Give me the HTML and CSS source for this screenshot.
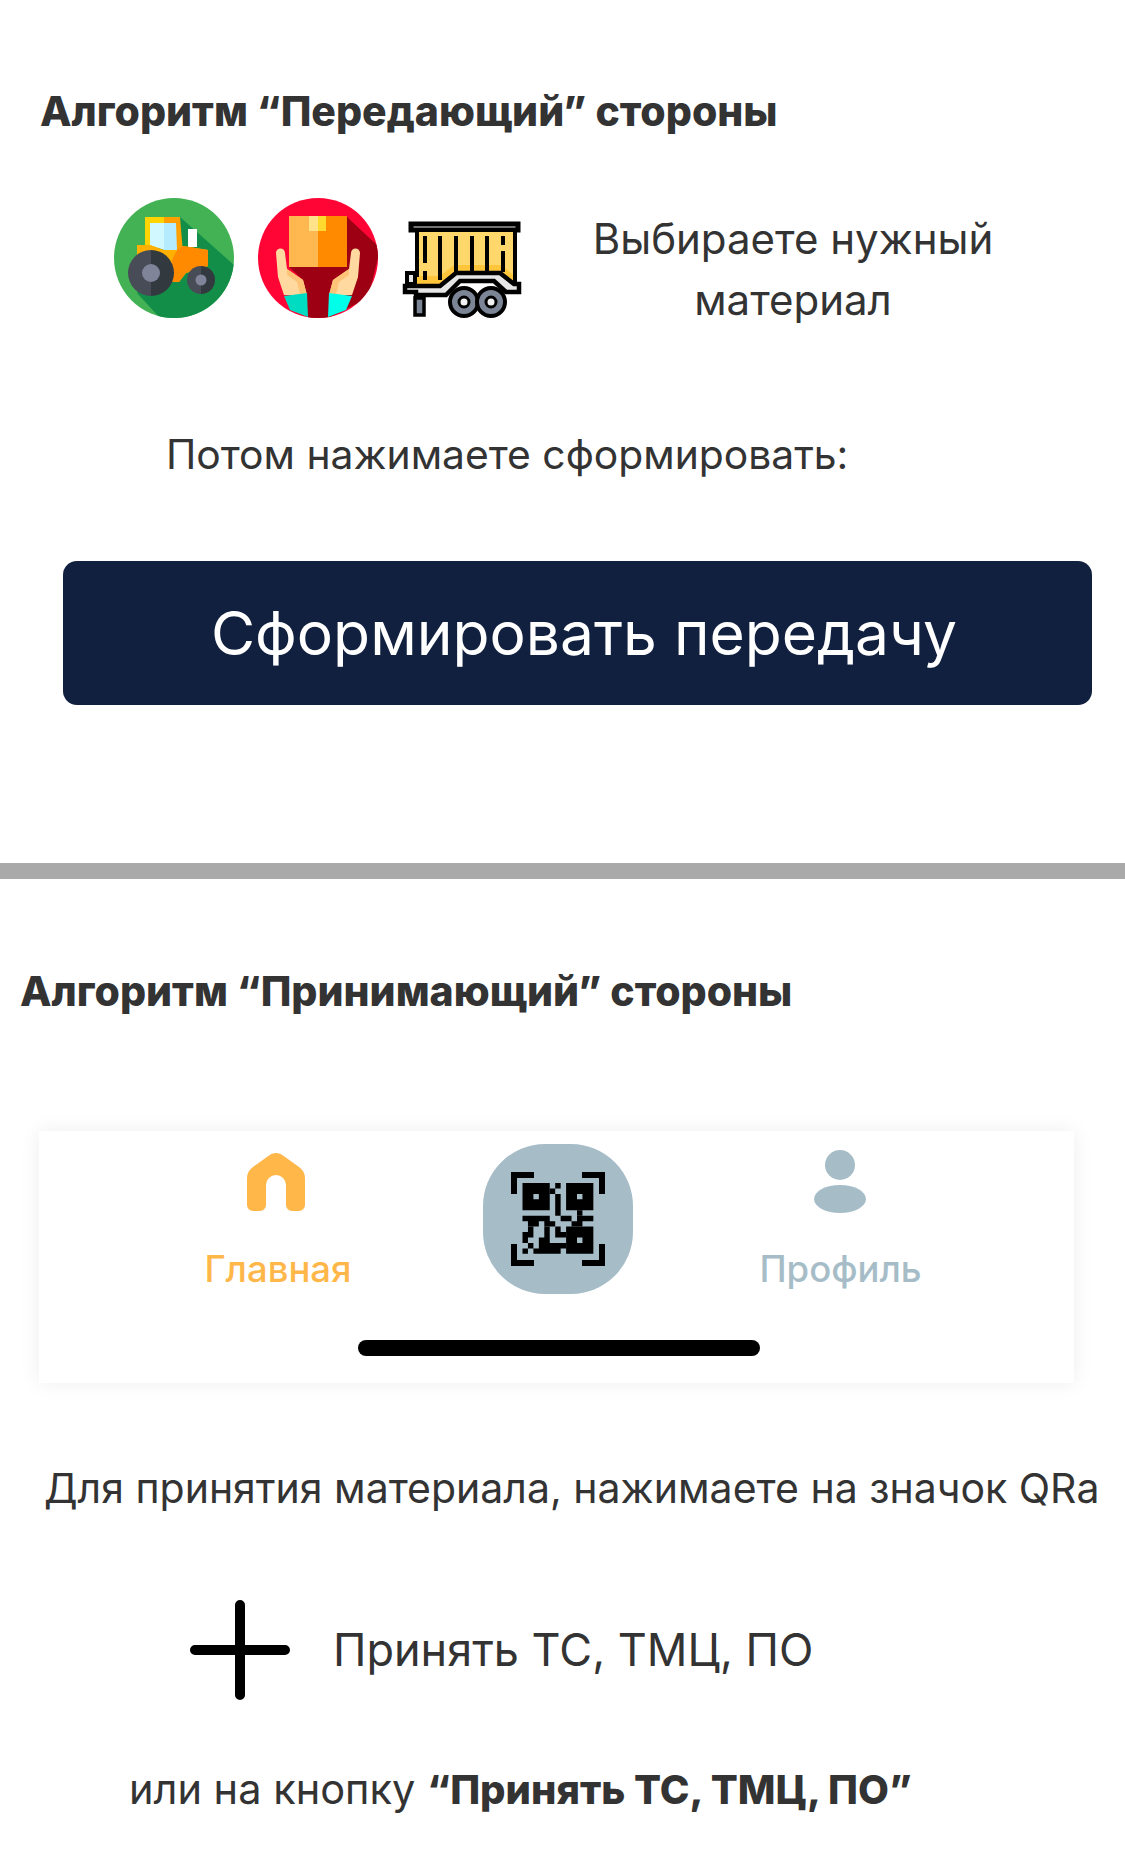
FILE: index.html
```html
<!DOCTYPE html>
<html lang="ru">
<head>
    <meta charset="UTF-8">
    <meta name="viewport" content="width=device-width, initial-scale=1.0">
    <title>Алгоритм</title>
    <link rel="stylesheet" href="styles.css">
</head>
<body>

<h2 class="algo-title sender-title">Алгоритм “Передающий” стороны</h2>

<div class="pick-row">
    <svg class="pick-icon" viewBox="0 0 120 120">
        <defs>
            <clipPath id="circle-clip"><circle cx="60" cy="60" r="60"/></clipPath>
        </defs>
        <circle cx="60" cy="60" r="60" fill="#43b254"/>
        <polygon points="66,19 120,67 120,120 46,120 23,95 40,50" fill="#138e49" clip-path="url(#circle-clip)"/>
        <rect x="74" y="31" width="9" height="18" fill="#fff"/>
        <polygon points="31,19 50,19 50,50 31,50" fill="#ffd400"/>
        <polygon points="50,19 66,19 69,55 50,55" fill="#ff9f00"/>
        <polygon points="36,25 50,25 50,52 36,47" fill="#d2f8ff"/>
        <polygon points="50,25 62,25 63,52 50,52" fill="#b4ebff"/>
        <polygon points="23,47 36,47 50,52 63,52 69,48 94,52 94,68 72,75 65,84 50,84 23,62" fill="#ffb000"/>
        <polygon points="63,52 69,48 94,52 94,68 72,75 65,84 56,84 58,62" fill="#ff8a00"/>
        <path d="M37 52a23 23 0 0 0 0 46z" fill="#474c56"/>
        <path d="M37 52a23 23 0 0 1 0 46z" fill="#32393f"/>
        <circle cx="37" cy="75" r="9" fill="#7f8499"/>
        <path d="M87 68a14 14 0 0 0 0 28z" fill="#474c56"/>
        <path d="M87 68a14 14 0 0 1 0 28z" fill="#32393f"/>
        <circle cx="87" cy="82" r="5.5" fill="#7f8499"/>
    </svg>
    <svg class="pick-icon" viewBox="0 0 120 120">
        <circle cx="60" cy="60" r="60" fill="#ff0536"/>
        <polygon points="89,19 120,48 120,60 110,100 94,108 70,120 50,120 45,82 31,69" fill="#9c0012" clip-path="url(#circle-clip)"/>
        <rect x="31" y="18" width="29" height="51" fill="#ffb74f"/>
        <rect x="60" y="18" width="29" height="51" fill="#ff8a00"/>
        <rect x="51" y="18" width="9" height="15" fill="#ffe28a"/>
        <rect x="60" y="18" width="8" height="15" fill="#ffd92e"/>
        <path d="M18 55a4.500 4.500 0 0 1 9 0l2 16 16 11 4 15H26l-6-18z" fill="#ffd9a0"/>
        <path d="M29 71l16 11 4 15h-7l-3-13-10-7z" fill="#ffc477"/>
        <path d="M102 55a4.500 4.500 0 0 0-9 0l-2 16-16 11-4 15h23l6-18z" fill="#ffd9a0"/>
        <path d="M91 71l-16 11-4 15h7l3-13 10-7z" fill="#ffc477"/>
        <polygon points="26,98 49,95 50,119 32,112" fill="#00dcc2" clip-path="url(#circle-clip)"/>
        <polygon points="94,98 71,95 70,119 88,112" fill="#00ffe8" clip-path="url(#circle-clip)"/>
    </svg>
    <svg class="pick-icon trailer-icon" viewBox="0 0 120 97">
        <rect x="9" y="3" width="107" height="6" fill="#e6e6e6" stroke="#000" stroke-width="5"/>
        <polygon points="15,11 113,11 113,62 100,52 54,52 38,66 15,66" fill="#ffd76a"/>
        <polygon points="15,55 38,55 52,44 100,44 113,56 113,62 100,52 54,52 38,66 15,66" fill="#ffc63c"/>
        <path d="M15 11v45M113 11v52" stroke="#000" stroke-width="4" fill="none"/>
        <path d="M23 15v27M23 50v9M38 15v44M54 15v36M70 15v36M85 15v36M101 15v9M101 30v21" stroke="#000" stroke-width="4" fill="none"/>
        <rect x="5" y="52" width="8" height="11" fill="#e6e6e6" stroke="#000" stroke-width="4"/>
        <polygon points="13,65 38,65 54,52 98,52 112,63 117,63 117,71 104,71 92,60 58,60 44,74 14,74 14,71 3,71 3,65" fill="#e6e6e6" stroke="#000" stroke-width="4.500"/>
        <rect x="13" y="77" width="9" height="17" fill="#7b8596" stroke="#000" stroke-width="3.500"/>
        <circle cx="62" cy="81" r="14" fill="#7b8596" stroke="#000" stroke-width="4"/>
        <circle cx="62" cy="81" r="5" fill="#f2f2f2" stroke="#000" stroke-width="3"/>
        <circle cx="89" cy="81" r="14" fill="#7b8596" stroke="#000" stroke-width="4"/>
        <circle cx="89" cy="81" r="5" fill="#f2f2f2" stroke="#000" stroke-width="3"/>
    </svg>
    <p class="pick-text">Выбираете нужный<br>материал</p>
</div>

<p class="hint-text">Потом нажимаете сформировать:</p>

<button class="action-button">Сформировать передачу</button>

<div class="divider"></div>

<h2 class="algo-title receiver-title">Алгоритм “Принимающий” стороны</h2>

<div class="tab-card">
    <div class="tab-row">
        <div class="tab-item tab-active">
            <svg class="tab-icon" viewBox="0 0 58 58">
                <path d="M22 2.500a11 11 0 0 1 14 0L52 14a14 14 0 0 1 6 11v27a6 6 0 0 1-6 6h-7a6 6 0 0 1-6-6V32a10 10 0 0 0-20 0v20a6 6 0 0 1-6 6H6a6 6 0 0 1-6-6V25a14 14 0 0 1 6-11z" fill="#ffb74a"/>
            </svg>
            <span>Главная</span>
        </div>
        <div class="qr-button">
            <svg class="qr-icon" viewBox="0 0 94 94">
                <path d="M0 0h23v6H6v16H0zM94 0H71v6h17v16h6zM0 94h23v-6H6V72H0zM94 94H71v-6h17V72h6z" fill="#000"/>
                <g transform="translate(11.500 11) scale(5.450)" fill="#000">
                    <path d="M0 0h5v5H0zM2 2v1h1V2zM8 0h5v5H8zM10 2v1h1V2z" fill-rule="evenodd"/>
                    <path d="M6 0h1v1H6zM5 1h1v1H5zM6 2h1v3H6zM6 5h1v1H6zM10 5h1v1h-1z"/>
                    <path d="M0 6h5v1H0zM7 6h2v1H7zM10 6h3v1h-3zM9 7h2v1H9zM1 7h2v1H1zM4 7h2v1H4z"/>
                    <path d="M1 8h1v1H1zM4 8h1v2H4zM6 8h1v1H6zM0 9h2v1H0zM6 9h2v1H6zM0 10h1v1H0zM3 10h2v1H3zM1 11h1v1H1zM3 11h5v1H3zM0 12h1v1H0zM2 12h5v1H2z"/>
                    <path d="M8 8h5v5H8zM10 10v1h1v-1z" fill-rule="evenodd"/>
                </g>
            </svg>
        </div>
        <div class="tab-item tab-muted">
            <svg class="tab-icon person-icon" viewBox="0 0 52 63">
                <circle cx="26" cy="15" r="15" fill="#a6bdc8"/>
                <ellipse cx="26" cy="49" rx="26" ry="14" fill="#a6bdc8"/>
            </svg>
            <span>Профиль</span>
        </div>
    </div>
    <div class="home-bar"></div>
</div>

<p class="qr-text">Для принятия материала, нажимаете на значок QRа</p>

<div class="accept-row">
    <svg class="plus-icon" viewBox="0 0 100 100">
        <path d="M50 5v90M5 50h90" stroke="#000" stroke-width="10" stroke-linecap="round"/>
    </svg>
    <span class="accept-label">Принять ТС, ТМЦ, ПО</span>
</div>

<p class="or-text">или на кнопку <b>“Принять ТС, ТМЦ, ПО”</b></p>

</body>
</html>
```

FILE: styles.css
```css
body {
    margin: 0;
    height: 1857px;
    overflow: hidden;
    background: #fff;
    color: #333;
    font-family: 'Inter', 'Noto Sans', sans-serif;
}

p {
    margin: 0;
}

.algo-title {
    margin: 0;
    font-size: 41px;
    font-weight: 800;
    line-height: 44px;
    white-space: nowrap;
}

.sender-title {
    margin: 89px 0 0 40px;
}

.receiver-title {
    margin: 90px 0 0 20px;
}

.pick-row {
    display: flex;
    align-items: center;
    gap: 24px;
    margin-top: 65px;
    padding-left: 114px;
    height: 120px;
}

.pick-icon {
    width: 120px;
    height: 120px;
    flex: none;
}

.trailer-icon {
    height: 97px;
    align-self: flex-end;
}

.pick-text {
    width: 542px;
    margin-top: 22px;
    margin-left: -24px;
    font-size: 42px;
    line-height: 61px;
    text-align: center;
}

.hint-text {
    margin: 111px 0 0 166px;
    font-size: 40.8px;
    line-height: 50px;
}

.action-button {
    display: block;
    width: 1029px;
    height: 144px;
    margin: 82px 0 0 63px;
    padding: 0 0 0 13px;
    border: none;
    border-radius: 14px;
    background: #11203e;
    color: #fff;
    font-family: 'Inter', sans-serif;
    font-size: 60.5px;
    cursor: pointer;
}

.divider {
    height: 16px;
    margin-top: 158px;
    background: #a9a9a9;
}

.tab-card {
    width: 1035px;
    height: 252px;
    margin: 118px 0 0 39px;
    background: #fff;
    box-shadow: 0 0 20px rgba(0, 0, 0, 0.07);
    box-sizing: border-box;
    padding-top: 13px;
}

.tab-row {
    display: grid;
    grid-template-columns: 200px 150px 200px;
    justify-content: start;
    column-gap: 105px;
    padding-left: 139px;
}

.tab-item {
    display: flex;
    flex-direction: column;
    align-items: center;
    padding-top: 9px;
    font-size: 36.5px;
    font-weight: 500;
}

.tab-item span {
    margin-top: 36px;
    line-height: 44px;
}

.tab-active {
    color: #ffb74a;
}

.tab-muted {
    margin-left: 5px;
    color: #a6bdc8;
}

.tab-icon {
    width: 58px;
    height: 58px;
    margin-right: 4px;
}

.person-icon {
    width: 52px;
    height: 63px;
    margin-top: -3px;
    margin-bottom: -2px;
    margin-right: 1px;
}

.qr-button {
    display: flex;
    align-items: center;
    justify-content: center;
    height: 150px;
    border-radius: 62px;
    background: #a6bdc8;
}

.qr-icon {
    width: 94px;
    height: 94px;
}

.home-bar {
    width: 402px;
    height: 16px;
    margin: 46px 0 0 319px;
    border-radius: 8px;
    background: #000;
}

.qr-text {
    margin: 80px 0 0 44px;
    font-size: 41px;
    line-height: 50px;
    white-space: nowrap;
}

.accept-row {
    display: flex;
    align-items: center;
    gap: 43px;
    margin: 87px 0 0 190px;
}

.plus-icon {
    width: 100px;
    height: 100px;
}

.accept-label {
    font-size: 45px;
    line-height: 60px;
}

.or-text {
    margin: 64px 0 0 129px;
    font-size: 41.5px;
    line-height: 50px;
    white-space: nowrap;
}

.or-text b {
    font-size: 40px;
    font-weight: 800;
}
```
